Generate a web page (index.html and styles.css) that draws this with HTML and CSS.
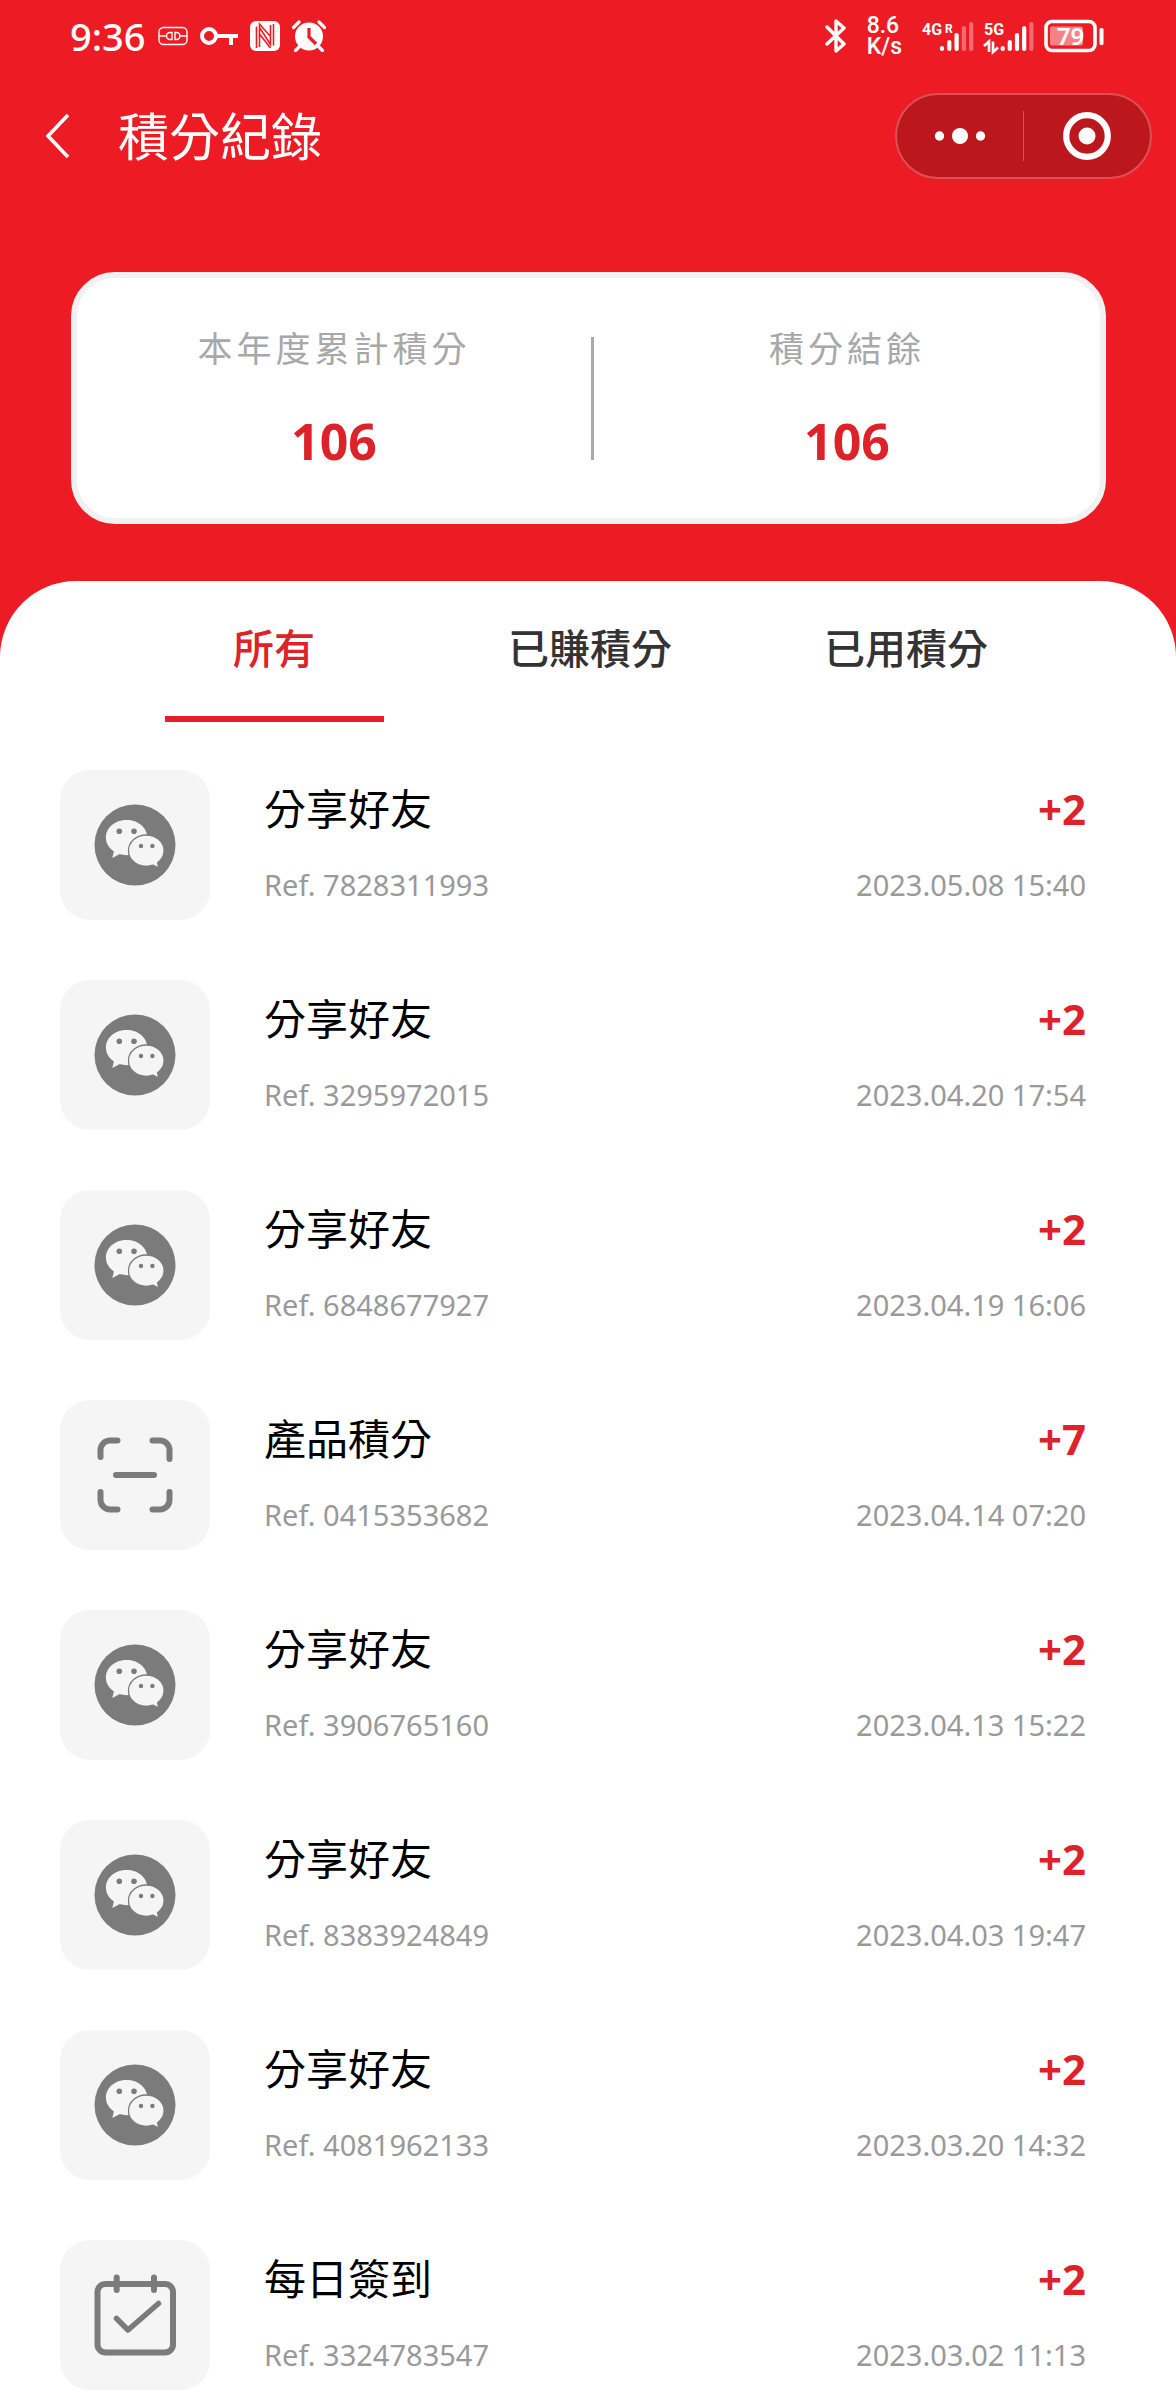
FILE: index.html
```html
<!DOCTYPE html>
<html lang="zh-Hant">
<head>
<meta charset="utf-8">
<meta name="viewport" content="width=device-width, initial-scale=1">
<title>積分紀錄</title>
<link rel="stylesheet" href="styles.css">
</head>
<body>
<svg class="sprite" aria-hidden="true">
  <symbol id="icon-share" viewBox="0 0 150 150">
    <circle cx="75" cy="75" r="40.5" fill="#7b7b7b"/>
    <path d="M66.600 50c-11.500 0-20.700 7.600-20.700 17.600 0 5.800 2.900 10.400 8 13.800l-1.600 6.500 7.600-3.800c2.400.8 4.400 1.200 6.700 1.200 11.500 0 20.700-7.700 20.700-17.700S78.100 50 66.600 50z" fill="#f5f5f5"/>
    <path d="M86.300 65c9.900 0 17.800 7 17.800 15.700 0 4.900-2.700 9-6.500 12l1.200 5.300-5.800-2.900c-2.300.8-4.400 1.200-6.700 1.200-9.900 0-17.800-6.900-17.800-15.600S76.400 65 86.300 65z" fill="#f5f5f5" stroke="#7b7b7b" stroke-width="1.300"/>
    <g fill="#7b7b7b"><circle cx="59.300" cy="61.200" r="2.800"/><circle cx="74" cy="61.200" r="2.800"/><circle cx="81" cy="76" r="2.200"/><circle cx="92.400" cy="76" r="2.200"/></g>
  </symbol>
  <symbol id="icon-scan" viewBox="0 0 150 150">
    <path d="M40.500 57V50a9.500 9.500 0 0 1 9.500-9.500h7.500M92.500 40.500h7.500a9.500 9.500 0 0 1 9.500 9.500v9M109.500 92v8a9.500 9.500 0 0 1-9.500 9.500h-7.500M57.500 109.500H50a9.500 9.500 0 0 1-9.500-9.500v-8M56 75h38" fill="none" stroke="#7b7b7b" stroke-width="6" stroke-linecap="round"/>
  </symbol>
  <symbol id="icon-checkin" viewBox="0 0 150 150">
    <g fill="none" stroke="#7b7b7b" stroke-width="6" stroke-linecap="round" stroke-linejoin="round">
      <rect x="37.500" y="44" width="75.500" height="68.500" rx="8"/>
      <path d="M56.700 37.500v12.500M94 37.500v12.500"/>
      <path d="M56.500 78.500L68 90l30.500-26.500" stroke-width="5.500"/>
    </g>
  </symbol>
</svg>

<header class="status">
  <div class="status-left">
    <time class="clock">9:36</time>
    <svg width="30" height="20" viewBox="0 0 30 20" fill="none" stroke="#fff" stroke-width="1.400"><rect x="1" y="1.500" width="28" height="17" rx="4.500"/><path d="M1 10h8M21 10h8M14 6.500h-2a3.500 3.500 0 0 0 0 7h2zM17 6.500h1.500a3.500 3.500 0 0 1 0 7H17z"/></svg>
    <svg width="38" height="20" viewBox="0 0 38 20" fill="none" stroke="#fff" stroke-width="4"><circle cx="9" cy="10" r="7"/><path d="M16 10h22M31 10v9"/></svg>
    <svg width="30" height="30" viewBox="0 0 30 30"><rect width="30" height="30" rx="6" fill="#fff"/><path d="M6.500 27V5.500M23.500 3v21.500" stroke="#ed1c24" stroke-width="1.600"/><path d="M9.500 26V6.500l11 17V4M9.500 6.500V3l11 12.500M9.500 13l11 14" fill="none" stroke="#ed1c24" stroke-width="1.600"/></svg>
    <svg width="34" height="32" viewBox="0 0 34 32"><circle cx="17" cy="16.500" r="14" fill="#fff"/><path d="M1.500 7.500L7 2M32.500 7.500L27 2M7 27l-3.500 3.500M27 27l3.500 3.500" stroke="#fff" stroke-width="3.200" stroke-linecap="round"/><path d="M17 8v9l7 7" fill="none" stroke="#ed1c24" stroke-width="3.200"/></svg>
  </div>
  <div class="status-right">
    <svg width="22" height="34" viewBox="0 0 22 34" fill="none" stroke="#fff" stroke-width="3.400" stroke-linecap="round" stroke-linejoin="round"><path d="M2 8l17 17-8 7V2l8 7L2 25"/></svg>
    <div class="speed"><span>8.6</span><span>K/s</span></div>
    <svg class="signal" width="52" height="34" viewBox="0 0 52 34">
      <text x="0" y="16" class="net">4G</text><text x="23" y="14" class="net-small">R</text>
      <g stroke="#fff" stroke-width="4.200" stroke-linecap="round"><path d="M20 30v-1M27.300 30v-7M34.600 30v-14"/><path d="M41.900 30V9M49.200 30V5" opacity=".35"/></g>
    </svg>
    <svg class="signal" width="50" height="34" viewBox="0 0 50 34">
      <text x="0" y="16" class="net">5G</text>
      <path d="M0 27l5-4.500V33M9 22.500V33l5-4.500" fill="none" stroke="#fff" stroke-width="2.600"/>
      <g stroke="#fff" stroke-width="4.200" stroke-linecap="round"><path d="M18.700 30v-1M25.800 30v-7M33 30V16M40.200 30V9"/><path d="M47.300 30V5" opacity=".35"/></g>
    </svg>
    <svg width="60" height="34" viewBox="0 0 60 34">
      <rect x="2" y="2.500" width="49" height="29" rx="6" fill="none" stroke="#fff" stroke-width="3.600"/>
      <rect x="6" y="7.500" width="33" height="19" rx="2" fill="#fff" opacity=".45"/>
      <rect x="55.500" y="9" width="4" height="17" rx="1.500" fill="#fff"/>
      <text x="26.500" y="26" class="charge">79</text>
    </svg>
  </div>
</header>

<nav class="nav">
  <button class="back" type="button" aria-label="返回"><svg width="24" height="46" viewBox="0 0 24 46"><path d="M22 2L2 23l20 21" fill="none" stroke="#fff" stroke-width="3.600"/></svg></button>
  <h1 class="title">積分紀錄</h1>
  <div class="capsule">
    <button type="button" aria-label="更多"><svg width="52" height="18" viewBox="0 0 52 18" fill="#fff"><circle cx="5.500" cy="9" r="4.700"/><circle cx="26" cy="9" r="8"/><circle cx="46.500" cy="9" r="4.700"/></svg></button>
    <button type="button" aria-label="關閉"><svg width="48" height="48" viewBox="0 0 48 48"><circle cx="24" cy="24" r="20.800" fill="none" stroke="#fff" stroke-width="6.200"/><circle cx="24" cy="24" r="8.500" fill="#fff"/></svg></button>
  </div>
</nav>

<section class="summary">
  <div class="stat"><span class="stat-label">本年度累計積分</span><strong class="stat-value">106</strong></div>
  <div class="stat"><span class="stat-label">積分結餘</span><strong class="stat-value">106</strong></div>
</section>

<main class="sheet">
  <div class="tabs">
    <button class="tab active" type="button">所有</button>
    <button class="tab" type="button">已賺積分</button>
    <button class="tab" type="button">已用積分</button>
  </div>
  <ul class="records">
    <li class="record"><svg class="icon"><use href="#icon-share"/></svg><div class="info"><span class="name">分享好友</span><span class="meta">Ref. 7828311993</span></div><div class="info end"><span class="points">+2</span><time class="meta">2023.05.08 15:40</time></div></li>
    <li class="record"><svg class="icon"><use href="#icon-share"/></svg><div class="info"><span class="name">分享好友</span><span class="meta">Ref. 3295972015</span></div><div class="info end"><span class="points">+2</span><time class="meta">2023.04.20 17:54</time></div></li>
    <li class="record"><svg class="icon"><use href="#icon-share"/></svg><div class="info"><span class="name">分享好友</span><span class="meta">Ref. 6848677927</span></div><div class="info end"><span class="points">+2</span><time class="meta">2023.04.19 16:06</time></div></li>
    <li class="record"><svg class="icon"><use href="#icon-scan"/></svg><div class="info"><span class="name">產品積分</span><span class="meta">Ref. 0415353682</span></div><div class="info end"><span class="points">+7</span><time class="meta">2023.04.14 07:20</time></div></li>
    <li class="record"><svg class="icon"><use href="#icon-share"/></svg><div class="info"><span class="name">分享好友</span><span class="meta">Ref. 3906765160</span></div><div class="info end"><span class="points">+2</span><time class="meta">2023.04.13 15:22</time></div></li>
    <li class="record"><svg class="icon"><use href="#icon-share"/></svg><div class="info"><span class="name">分享好友</span><span class="meta">Ref. 8383924849</span></div><div class="info end"><span class="points">+2</span><time class="meta">2023.04.03 19:47</time></div></li>
    <li class="record"><svg class="icon"><use href="#icon-share"/></svg><div class="info"><span class="name">分享好友</span><span class="meta">Ref. 4081962133</span></div><div class="info end"><span class="points">+2</span><time class="meta">2023.03.20 14:32</time></div></li>
    <li class="record"><svg class="icon"><use href="#icon-checkin"/></svg><div class="info"><span class="name">每日簽到</span><span class="meta">Ref. 3324783547</span></div><div class="info end"><span class="points">+2</span><time class="meta">2023.03.02 11:13</time></div></li>
  </ul>
</main>
</body>
</html>
```
FILE: styles.css
```css
* { box-sizing: border-box; }

body {
  margin: 0;
  min-height: 100vh;
  display: flex;
  flex-direction: column;
  background: #ed1c24;
  color: #000;
  font-family: "Noto Sans", "Noto Sans CJK TC", sans-serif;
}

button {
  padding: 0;
  border: 0;
  background: none;
  color: inherit;
  font: inherit;
  cursor: pointer;
}

svg { display: block; flex: none; }
.sprite { display: none; }

/* Status bar */
.status {
  display: flex;
  justify-content: space-between;
  align-items: center;
  height: 72px;
  padding: 0 72px 0 70px;
  color: #fff;
}
.status-left { display: flex; align-items: center; gap: 12px; }
.status-right { display: flex; align-items: center; gap: 10px; }
.clock { font-size: 38px; font-weight: 500; line-height: 48px; }
.speed {
  display: flex;
  flex-direction: column;
  margin: 0 10px;
  font-family: Roboto, sans-serif;
  font-size: 23px;
  font-weight: 500;
  line-height: 21px;
}
.signal { overflow: visible; }
.net, .net-small { fill: #fff; font-family: Roboto, sans-serif; font-weight: 700; }
.net { font-size: 16px; }
.net-small { font-size: 12px; }
.charge { fill: #fff; font-size: 24px; font-weight: 600; text-anchor: middle; }

/* Title bar */
.nav {
  display: flex;
  align-items: center;
  height: 128px;
  padding: 0 24px 0 46px;
  color: #fff;
}
.title {
  flex: 1;
  margin: 0 0 0 48px;
  padding-bottom: 4px;
  font-family: "Noto Sans CJK TC", sans-serif;
  font-size: 51px;
  font-weight: 400;
  line-height: 60px;
}
.capsule {
  display: flex;
  align-items: center;
  width: 257px;
  height: 86px;
  border: 2px solid #dc5055;
  border-radius: 43px;
  background: #bb171c;
}
.capsule button { flex: 1; display: grid; place-items: center; height: 50px; }
.capsule button + button { border-left: 1px solid #dc5055; }

/* Points summary */
.summary {
  display: grid;
  grid-template-columns: 101fr 100fr;
  align-items: center;
  margin: 72px 70px 57px 71px;
  height: 252px;
  border: 6px solid #f1f1f1;
  border-radius: 44px;
  background: #fff;
}
.stat {
  display: flex;
  flex-direction: column;
  align-items: center;
  gap: 42px;
  height: 123px;
  margin-top: 1px;
}
.stat + .stat { border-left: 3px solid #aaa; }
.stat-label {
  margin-top: -12px;
  color: #a8a8a8;
  font-family: "Noto Sans CJK TC", sans-serif;
  font-size: 35px;
  font-weight: 400;
  line-height: 44px;
  letter-spacing: 4px;
}
.stat-value { color: #dd222a; font-size: 50px; font-weight: 700; line-height: 60px; }

/* Records sheet */
.sheet { flex: 1; border-radius: 76px 76px 0 0; background: #fff; }
.tabs {
  display: grid;
  grid-template-columns: repeat(3, 1fr);
  justify-items: center;
  padding: 0 112px 0 116px;
}
.tab {
  width: 219px;
  padding: 41px 0 46px;
  border-bottom: 6px solid transparent;
  color: #333;
  font-family: "Noto Sans CJK TC", sans-serif;
  font-size: 41px;
  font-weight: 500;
  line-height: 48px;
}
.tab.active { border-color: #e51e29; color: #dd222a; }

.records {
  display: flex;
  flex-direction: column;
  gap: 60px;
  margin: 0;
  padding: 48px 90px 10px 60px;
  list-style: none;
}
.record { display: flex; align-items: center; gap: 54px; }
.icon { width: 150px; height: 150px; border-radius: 30px; background: #f5f5f5; }
.info { display: flex; flex-direction: column; gap: 36px; padding-bottom: 4px; }
.info.end { gap: 34px; padding-bottom: 2px; margin-left: auto; align-items: flex-end; }
.name { font-family: "Noto Sans CJK TC", sans-serif; font-size: 42px; line-height: 48px; }
.meta { color: #999; font-size: 29px; line-height: 36px; }
.points { color: #dd222a; font-size: 42px; font-weight: 700; line-height: 48px; }
```
